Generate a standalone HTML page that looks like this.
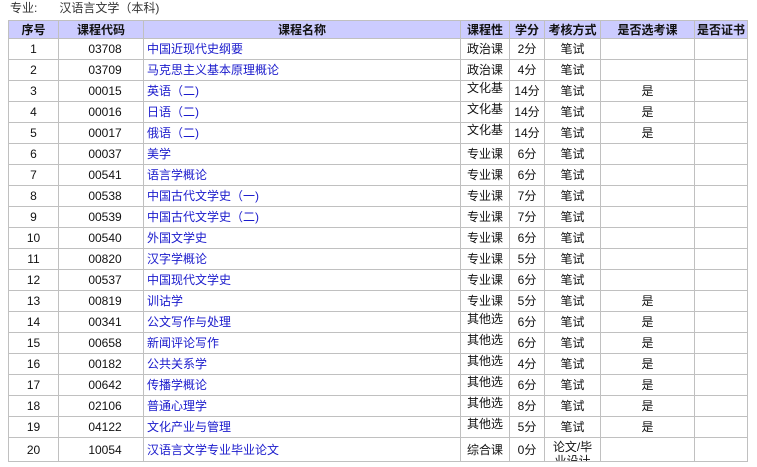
<!DOCTYPE html>
<html><head><meta charset="utf-8"><style>
body{margin:0;background:#fff;font-family:"Liberation Sans","Noto Sans CJK SC",sans-serif;font-size:12px;color:#111;width:757px;height:467px;overflow:hidden;position:relative}
.hd{position:absolute;top:0;left:10px;height:18px;line-height:16px;color:#333}
.hd span{margin-left:22px}
table{position:absolute;left:8px;top:20px;border-collapse:collapse;table-layout:fixed;width:739px}
td,th{border:1px solid #c0c0c0;padding:0;height:20px;text-align:center;white-space:nowrap;overflow:hidden;line-height:16px}
th{background:#ccccff;font-weight:bold;height:17px;color:#111}
td.n{text-align:left;padding-left:3px;color:#1a1acc}
td.c{padding-left:8px}
.up{position:relative;top:-3px}
tr.l td{height:23px}
.sm{display:block;font-size:12px;line-height:14px;height:21px;overflow:hidden;padding-top:2px}
</style></head><body>
<div class="hd">专业:<span>汉语言文学（本科)</span></div>
<table>
<colgroup><col style="width:50px"><col style="width:85px"><col style="width:317px"><col style="width:49px"><col style="width:35px"><col style="width:56px"><col style="width:94px"><col style="width:53px"></colgroup>
<tr><th>序号</th><th>课程代码</th><th>课程名称</th><th>课程性</th><th>学分</th><th>考核方式</th><th>是否选考课</th><th>是否证书</th></tr>
<tr><td>1</td><td class="c">03708</td><td class="n">中国近现代史纲要</td><td>政治课</td><td>2分</td><td>笔试</td><td></td><td></td></tr>
<tr><td>2</td><td class="c">03709</td><td class="n">马克思主义基本原理概论</td><td>政治课</td><td>4分</td><td>笔试</td><td></td><td></td></tr>
<tr><td>3</td><td class="c">00015</td><td class="n">英语（二)</td><td><span class="up">文化基</span></td><td>14分</td><td>笔试</td><td>是</td><td></td></tr>
<tr><td>4</td><td class="c">00016</td><td class="n">日语（二)</td><td><span class="up">文化基</span></td><td>14分</td><td>笔试</td><td>是</td><td></td></tr>
<tr><td>5</td><td class="c">00017</td><td class="n">俄语（二)</td><td><span class="up">文化基</span></td><td>14分</td><td>笔试</td><td>是</td><td></td></tr>
<tr><td>6</td><td class="c">00037</td><td class="n">美学</td><td>专业课</td><td>6分</td><td>笔试</td><td></td><td></td></tr>
<tr><td>7</td><td class="c">00541</td><td class="n">语言学概论</td><td>专业课</td><td>6分</td><td>笔试</td><td></td><td></td></tr>
<tr><td>8</td><td class="c">00538</td><td class="n">中国古代文学史（一)</td><td>专业课</td><td>7分</td><td>笔试</td><td></td><td></td></tr>
<tr><td>9</td><td class="c">00539</td><td class="n">中国古代文学史（二)</td><td>专业课</td><td>7分</td><td>笔试</td><td></td><td></td></tr>
<tr><td>10</td><td class="c">00540</td><td class="n">外国文学史</td><td>专业课</td><td>6分</td><td>笔试</td><td></td><td></td></tr>
<tr><td>11</td><td class="c">00820</td><td class="n">汉字学概论</td><td>专业课</td><td>5分</td><td>笔试</td><td></td><td></td></tr>
<tr><td>12</td><td class="c">00537</td><td class="n">中国现代文学史</td><td>专业课</td><td>6分</td><td>笔试</td><td></td><td></td></tr>
<tr><td>13</td><td class="c">00819</td><td class="n">训诂学</td><td>专业课</td><td>5分</td><td>笔试</td><td>是</td><td></td></tr>
<tr><td>14</td><td class="c">00341</td><td class="n">公文写作与处理</td><td><span class="up">其他选</span></td><td>6分</td><td>笔试</td><td>是</td><td></td></tr>
<tr><td>15</td><td class="c">00658</td><td class="n">新闻评论写作</td><td><span class="up">其他选</span></td><td>6分</td><td>笔试</td><td>是</td><td></td></tr>
<tr><td>16</td><td class="c">00182</td><td class="n">公共关系学</td><td><span class="up">其他选</span></td><td>4分</td><td>笔试</td><td>是</td><td></td></tr>
<tr><td>17</td><td class="c">00642</td><td class="n">传播学概论</td><td><span class="up">其他选</span></td><td>6分</td><td>笔试</td><td>是</td><td></td></tr>
<tr><td>18</td><td class="c">02106</td><td class="n">普通心理学</td><td><span class="up">其他选</span></td><td>8分</td><td>笔试</td><td>是</td><td></td></tr>
<tr><td>19</td><td class="c">04122</td><td class="n">文化产业与管理</td><td><span class="up">其他选</span></td><td>5分</td><td>笔试</td><td>是</td><td></td></tr>
<tr class="l"><td>20</td><td class="c">10054</td><td class="n">汉语言文学专业毕业论文</td><td>综合课</td><td>0分</td><td><span class="sm">论文/毕<br>业设计</span></td><td></td><td></td></tr>
</table>
</body></html>
